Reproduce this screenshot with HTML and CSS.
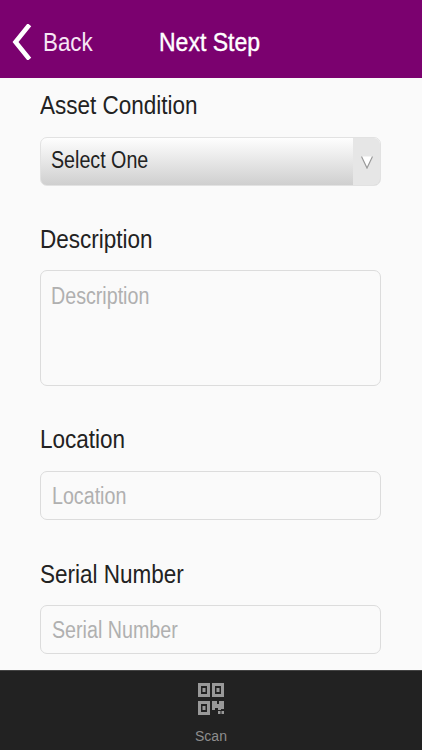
FILE: index.html
```html
<!DOCTYPE html>
<html lang="en">
<head>
<meta charset="utf-8">
<title>Next Step</title>
<link rel="stylesheet" href="styles.css">
</head>
<body>
<div class="app">
  <header class="top">
    <div class="back">
      <svg class="chev" width="20" height="36" viewBox="0 0 20 36"><path d="M16 2.500 3.500 18 16 33.500" fill="none" stroke="#fff" stroke-width="4.600" stroke-linecap="square"/></svg>
      <span class="nar back-text">Back</span>
    </div>
    <div class="title"><span class="nar title-text">Next Step</span></div>
  </header>
  <main class="form">
    <label class="lab"><span class="nar">Asset Condition</span></label>
    <div class="select">
      <span class="sel-text"><span class="nar ph">Select One</span></span>
      <span class="sel-btn"><svg width="14" height="14" viewBox="0 0 14 14"><path d="M1 1.500h12L7 13z" fill="#fff"/><path d="M1.500 1.500 7 13l5.500-11.500" fill="none" stroke="#999" stroke-width="1.200"/></svg></span>
    </div>
    <label class="lab lab-gap"><span class="nar">Description</span></label>
    <div class="input area"><span class="nar ph">Description</span></div>
    <label class="lab lab-gap"><span class="nar">Location</span></label>
    <div class="input"><span class="nar ph">Location</span></div>
    <label class="lab lab-gap"><span class="nar">Serial Number</span></label>
    <div class="input"><span class="nar ph">Serial Number</span></div>
  </main>
  <footer class="bar">
    <svg class="qr" width="26" height="32" viewBox="0 0 26 32">
      <g fill="none" stroke="#999" stroke-width="3">
        <rect x="1.500" y="1.500" width="9" height="11"/>
        <rect x="15.500" y="1.500" width="9" height="11"/>
        <rect x="1.500" y="19.500" width="9" height="11"/>
      </g>
      <g fill="#999">
        <rect x="4.500" y="5" width="3" height="4"/>
        <rect x="18.500" y="5" width="3" height="4"/>
        <rect x="4.500" y="23" width="3" height="4"/>
        <path d="M14 18h5v3h2v-3h5v8h-3v1h-3v-2h-3v2h-3z"/>
        <rect x="20" y="28" width="2.500" height="3"/>
        <rect x="23.500" y="28" width="2.500" height="3"/>
      </g>
    </svg>
    <span class="scan">Scan</span>
  </footer>
</div>
</body>
</html>
```
FILE: styles.css
```css
* { box-sizing: border-box; }
html, body { margin: 0; padding: 0; }
body { font-family: "Liberation Sans", Arial, sans-serif; background: #fafafa; }
.app { width: 422px; height: 750px; display: flex; flex-direction: column; overflow: hidden; }
.nar { display: inline-block; transform: scaleX(0.9); transform-origin: left center; white-space: nowrap; }
.ph { transform: scaleX(0.855); }
.top { height: 78px; flex: none; background: #7b016f; color: #fff; display: flex; align-items: center; padding: 6px 0 0 12px; }
.back { display: flex; align-items: center; width: 147px; font-size: 26px; color: #f6e6f4; }
.chev { margin-right: 11px; }
.back-text { transform: scaleX(0.86); }
.title { font-size: 26px; color: #fff; -webkit-text-stroke: 0.4px #fff; }
.title-text { transform: scaleX(0.885); }
.form { flex: 1; padding: 12px 41px 0 40px; display: flex; flex-direction: column; overflow: hidden; }
.lab { display: block; font-size: 25px; line-height: 30px; color: #222; height: 30px; }
.lab-gap { margin-top: 38px; }
.select { margin-top: 17px; height: 49px; flex: none; display: flex; border: 1.500px solid #e2e2e2; border-radius: 7px; overflow: hidden; background: linear-gradient(#fefefe, #cfcfcf); }
.sel-text { flex: 1; font-size: 23px; line-height: 45px; padding-left: 10px; color: #222; }
.sel-btn { width: 27px; background: #e6e6e6; display: flex; align-items: center; justify-content: center; }
.input { margin-top: 17px; margin-bottom: 1px; height: 49px; flex: none; border: 1.500px solid #dcdcdc; border-radius: 7px; background: #fafafa; font-size: 23px; line-height: 48px; padding-left: 11px; color: #b0b0b0; }
.input:last-child { margin-top: 16px; }
.area { margin-top: 16px; margin-bottom: 0; height: 116px; line-height: 50px; padding-left: 10px; }
.bar { height: 80px; flex: none; background: #222; border-top: 1px solid #444; display: flex; flex-direction: column; align-items: center; padding-top: 12px; }
.qr { display: block; }
.scan { margin-top: 13px; font-size: 14px; line-height: 16px; color: #8e8e8e; }
```
